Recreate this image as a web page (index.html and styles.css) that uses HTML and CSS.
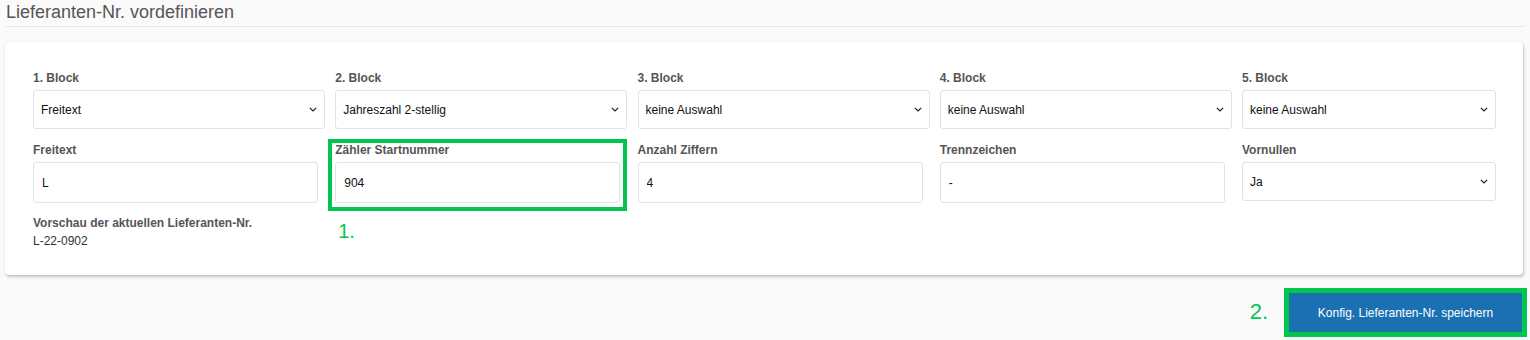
FILE: index.html
```html
<!DOCTYPE html>
<html lang="de">
<head>
  <meta charset="UTF-8" />
  <title>Lieferanten-Nr. vordefinieren</title>
  <link rel="stylesheet" href="styles.css">
</head>
<body>

  <div class="seite">
    <h1 class="titel">Lieferanten-Nr. vordefinieren</h1>

    <section class="karte">
      <div class="raster">
        <!-- Zeile 1: Blöcke -->
        <div class="feld">
          <label>1. Block</label>
          <select><option>Freitext</option></select>
        </div>
        <div class="feld">
          <label>2. Block</label>
          <select><option>Jahreszahl 2-stellig</option></select>
        </div>
        <div class="feld">
          <label>3. Block</label>
          <select><option>keine Auswahl</option></select>
        </div>
        <div class="feld">
          <label>4. Block</label>
          <select><option>keine Auswahl</option></select>
        </div>
        <div class="feld">
          <label>5. Block</label>
          <select><option>keine Auswahl</option></select>
        </div>

        <!-- Zeile 2: Werte -->
        <div class="feld">
          <label>Freitext</label>
          <input type="text" value="L" />
        </div>
        <div class="feld markiert">
          <label>Zähler Startnummer</label>
          <input type="text" value="904" />
          <span class="rahmen"></span>
          <span class="nummer eins">1.</span>
        </div>
        <div class="feld">
          <label>Anzahl Ziffern</label>
          <input type="text" value="4" />
        </div>
        <div class="feld">
          <label>Trennzeichen</label>
          <input type="text" value="-" />
        </div>
        <div class="feld">
          <label>Vornullen</label>
          <select><option>Ja</option></select>
        </div>
      </div>

      <div class="vorschau">
        <label>Vorschau der aktuellen Lieferanten-Nr.</label>
        <div class="wert">L-22-0902</div>
      </div>
    </section>

    <div class="aktionen">
      <span class="nummer">2.</span>
      <div class="knopf-rahmen">
        <button class="speichern">Konfig. Lieferanten-Nr. speichern</button>
      </div>
    </div>
  </div>

</body>
</html>
```

FILE: styles.css
```css
    :root {
      --bg-color: #fafafa;
      --label-color: #555;
      --border-color: #dde3e6;
      --green: #00c64f;
      --blue: #1b70b2;
    }

    body {
      margin: 0;
      background: var(--bg-color);
      font-family: 'Liberation Sans', Arial, sans-serif;
      color: #222;
    }

    .seite {
      padding: 0 3px 0 5px;
    }

    .titel {
      margin: 0;
      padding: 2px 0 0 1px;
      height: 24px;
      font-size: 18px;
      font-weight: normal;
      line-height: 21px;
      color: var(--label-color);
      border-bottom: 1px solid #e8e8e8;
      margin-right: 2px;
    }

    /* Karte mit den Feldern */
    .karte {
      margin-top: 15px;
      margin-right: 4px;
      background: #fff;
      border-radius: 4px;
      box-shadow: 1px 2px 3px rgba(0,0,0,0.22), 0 0 1px rgba(0,0,0,0.12);
      padding: 28px 28px 28px 28px;
      height: 233px;
      box-sizing: border-box;
    }

    .raster {
      display: grid;
      grid-template-columns: 292px 292px 292px 292px 254px;
      column-gap: 10.25px;
      row-gap: 13px;
    }

    .feld {
      position: relative;
      display: flex;
      flex-direction: column;
    }

    label {
      display: block;
      font-size: 12px;
      font-weight: bold;
      color: var(--label-color);
      line-height: 16px;
      margin-bottom: 4px;
    }

    select,
    input {
      font-family: 'Liberation Sans', Tahoma, sans-serif;
      font-size: 12px;
      color: #111;
      background-color: #fff;
      border: 1px solid var(--border-color);
      border-radius: 3px;
      box-sizing: border-box;
      height: 39px;
      outline: none;
    }

    /* schmaler Pfeil wie im Original */
    select {
      width: 100%;
      padding: 0 20px 0 7px;
      appearance: none;
      -webkit-appearance: none;
      background-image: url("data:image/svg+xml,%3Csvg xmlns='http://www.w3.org/2000/svg' width='8' height='5' viewBox='0 0 8 5'%3E%3Cpath d='M0.8 0.8 L4 4 L7.2 0.8' fill='none' stroke='%23222' stroke-width='1.2'/%3E%3C/svg%3E");
      background-repeat: no-repeat;
      background-position: right 7px center;
    }

    input {
      width: 285px;
      height: 41px;
      padding: 0 8px;
    }

    /* grüne Markierung (Annotation) */
    .rahmen {
      position: absolute;
      left: -7px;
      top: -3px;
      width: 299px;
      height: 72px;
      border: 4px solid var(--green);
      box-sizing: border-box;
      pointer-events: none;
    }

    .nummer {
      font-size: 20px;
      color: var(--green);
      line-height: 22px;
    }

    .nummer.eins {
      position: absolute;
      left: 3px;
      top: 78px;
    }

    .vorschau {
      margin-top: 12px;
    }

    .vorschau label {
      margin-bottom: 2px;
    }

    .vorschau .wert {
      font-size: 12px;
      color: #333;
      line-height: 16px;
    }

    /* Speichern */
    .aktionen {
      display: flex;
      justify-content: flex-end;
      align-items: center;
      gap: 16px;
      margin-top: 13px;
    }

    .aktionen .nummer {
      font-size: 22px;
      padding-bottom: 2px;
    }

    .knopf-rahmen {
      border: 5px solid var(--green);
    }

    .speichern {
      display: block;
      width: 233px;
      height: 39px;
      border: none;
      background: var(--blue);
      color: #fff;
      font-family: 'Liberation Sans', Arial, sans-serif;
      font-size: 12px;
      cursor: pointer;
    }
```
